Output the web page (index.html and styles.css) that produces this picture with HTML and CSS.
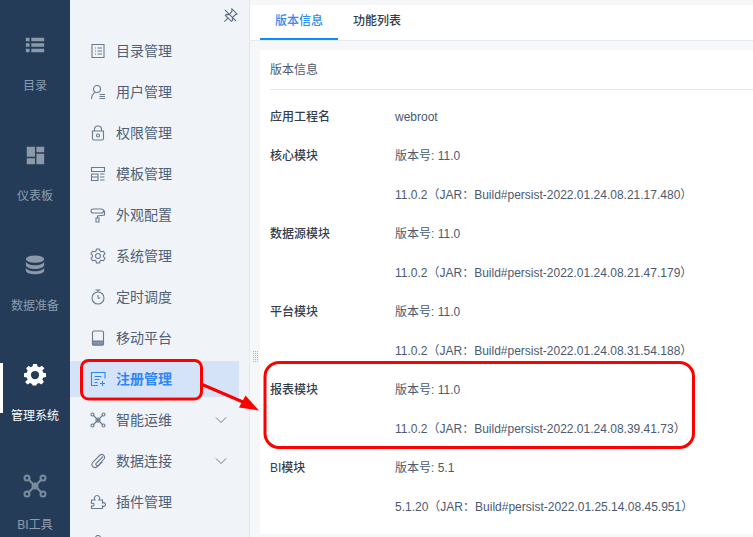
FILE: index.html
```html
<!DOCTYPE html>
<html lang="zh">
<head>
<meta charset="utf-8">
<title>版本信息</title>
<link rel="stylesheet" href="styles.css">
</head>
<body>
<div class="app">
  <aside class="rail">
    <div class="rail-item">
      <svg class="rail-icon" viewBox="0 0 24 24"><path class="fill" d="M2 4h4v4H2zM8 4h14v4H8zM2 10h4v4H2zM8 10h14v4H8zM2 16h4v4H2zM8 16h14v4H8z"/></svg>
      <span>目录</span>
    </div>
    <div class="rail-item">
      <svg class="rail-icon" viewBox="0 0 24 24"><path class="fill" d="M3 3h9v11H3zM13.500 3H22v6h-8.500zM13.500 10.500H22V22h-8.500zM3 15.500h9V22H3z"/></svg>
      <span>仪表板</span>
    </div>
    <div class="rail-item">
      <svg class="rail-icon" viewBox="0 0 24 24"><ellipse class="fill" cx="12" cy="5.500" rx="10" ry="4"/><path class="fill" d="M2 8.500c1 2.500 5 3.800 10 3.800s9-1.300 10-3.800v4c-1 2.500-5 3.800-10 3.800S3 15 2 12.500zM2 15c1 2.500 5 3.800 10 3.800S21 17.500 22 15v3.500c-1 2.500-5 3.500-10 3.500S3 21 2 18.500z"/></svg>
      <span>数据准备</span>
    </div>
    <div class="rail-item active">
      <svg class="rail-icon" viewBox="0 0 24 24"><path class="fill" d="M10 1h4l.6 3 2.300 1 2.600-1.700 2.800 2.800L20 8.700l1 2.300 3 .6v4l-3 .6-1 2.300 1.700 2.600-2.800 2.800-2.600-1.700-2.300 1-.6 1.800h-4l-.6-1.800-2.300-1-2.600 1.700-2.800-2.800L4 18.500l-1-2.300-3-.6v-4l3-.6 1-2.300-1.700-2.600 2.800-2.800L7.100 5l2.300-1z" transform="translate(0 -1.500)"/><circle cx="12" cy="12" r="4.500" fill="#243c58"/></svg>
      <span>管理系统</span>
    </div>
    <div class="rail-item">
      <svg class="rail-icon wide" viewBox="0 0 24 24"><path class="line" d="M5 5l14 14M19 5L5 19" /><circle class="line" cx="4" cy="4" r="2.500"/><circle class="line" cx="20" cy="4" r="2.500"/><circle class="line" cx="4" cy="20" r="2.500"/><circle class="line" cx="20" cy="20" r="2.500"/><circle class="line" cx="12" cy="12" r="2.500"/></svg>
      <span>BI工具</span>
    </div>
  </aside>

  <nav class="menu">
    <svg class="pin" viewBox="0 0 16 16"><path d="M9.500 1l5.500 5.500-2 .8-3 3 .2 2.700-1.200 1.200L2.500 8 3.700 6.800l2.700.2 3-3zM5 11l-3.500 3.500M2 2l12 12"/></svg>
    <a class="menu-item">
      <svg viewBox="0 0 16 16"><path d="M2 1.500h12v13H2zM5 5h1M7.500 5H12M5 8h1M7.500 8H12M5 11h1M7.500 11H12"/></svg>
      <span>目录管理</span>
    </a>
    <a class="menu-item">
      <svg viewBox="0 0 16 16"><circle cx="7" cy="5" r="3.500"/><path d="M1.500 15c0-3.500 1.500-5.500 3.500-6.500M9.500 10.500H15M9.500 12.500H15M9.500 14.500H15"/></svg>
      <span>用户管理</span>
    </a>
    <a class="menu-item">
      <svg viewBox="0 0 16 16"><path d="M4.500 6V4.500a3.500 3.500 0 0 1 7 0V6M2.500 6h11v7.500a1.500 1.500 0 0 1-1.500 1.500H4a1.500 1.500 0 0 1-1.500-1.500z"/><circle cx="8" cy="10.500" r="1.500"/></svg>
      <span>权限管理</span>
    </a>
    <a class="menu-item">
      <svg viewBox="0 0 16 16"><path d="M1.500 1.500h13v4h-13zM1.500 8h6.500v6.500H1.500zM10 8h4.500M10 11h4.500M10 14h4.500M1.500 11h6.500"/></svg>
      <span>模板管理</span>
    </a>
    <a class="menu-item">
      <svg viewBox="0 0 16 16"><path d="M3 2h8.500a1.500 1.500 0 0 1 0 4H3a1.500 1.500 0 0 1 0-4zM13 4h1.500v4L7.500 9v2M6 11h3v4H6z"/></svg>
      <span>外观配置</span>
    </a>
    <a class="menu-item">
      <svg viewBox="0 0 16 16"><path d="M6.500 1h3l.5 2 1.500.8 2-.6 1.500 2.600-1.500 1.400v1.600l1.500 1.400-1.500 2.600-2-.6-1.500.8-.5 2h-3l-.5-2-1.500-.8-2 .6L1 10.200l1.500-1.400V7.200L1 5.800l1.500-2.600 2 .6L6 3z" stroke-linejoin="round"/><circle cx="8" cy="8" r="2.500"/></svg>
      <span>系统管理</span>
    </a>
    <a class="menu-item">
      <svg viewBox="0 0 16 16"><circle cx="8" cy="9" r="6"/><path d="M5.500 1h5M8 1v2M8 6v3h2.500"/></svg>
      <span>定时调度</span>
    </a>
    <a class="menu-item">
      <svg viewBox="0 0 16 16"><rect x="2.500" y="1" width="11" height="14" rx="1.500"/><path class="solid" d="M2.500 11h11v3a1 1 0 0 1-1 1h-9a1 1 0 0 1-1-1z"/></svg>
      <span>移动平台</span>
    </a>
    <a class="menu-item active">
      <svg viewBox="0 0 16 16"><path d="M15 7.500V1.500H1.500v13H8M4.500 5.500h7M4.500 8.500h5M4.500 11.500h3M12.500 10v5M10 12.500h5"/></svg>
      <span>注册管理</span>
    </a>
    <a class="menu-item">
      <svg viewBox="0 0 16 16"><path d="M3 3l10 10M13 3L3 13"/><circle cx="2.500" cy="2.500" r="1.500"/><circle cx="13.500" cy="2.500" r="1.500"/><circle cx="2.500" cy="13.500" r="1.500"/><circle cx="13.500" cy="13.500" r="1.500"/><circle cx="8" cy="8" r="2"/></svg>
      <span>智能运维</span>
      <svg class="chev" viewBox="0 0 12 8"><path d="M1 1.500l5 5 5-5"/></svg>
    </a>
    <a class="menu-item">
      <svg viewBox="0 0 16 16"><path d="M13 3.500L6 10.500a1.500 1.500 0 0 0 2 2l6-6.500c2-2.500-1.500-6-4-4L3 9c-3 3.500 1 7.500 4.500 4.500l5-5"/></svg>
      <span>数据连接</span>
      <svg class="chev" viewBox="0 0 12 8"><path d="M1 1.500l5 5 5-5"/></svg>
    </a>
    <a class="menu-item">
      <svg viewBox="0 0 16 16"><path d="M1.500 6h3.500c-1.500-2 0-4.500 2-4.500S10.500 4 9 6h3.500v3c2-1 3 .5 3 1.500s-1 2.500-3 1.500v2.500h-11v-2.500c2 .5 2.500-.5 2.500-1.500S3.500 9 1.500 9.500z"/></svg>
      <span>插件管理</span>
    </a>
    <a class="menu-item">
      <svg viewBox="0 0 16 16"><circle cx="8" cy="3" r="2.500"/></svg>
    </a>
  </nav>

  <main class="main">
    <div class="tabs">
      <div class="tab active">版本信息</div>
      <div class="tab">功能列表</div>
    </div>
    <section class="card">
      <h2 class="card-title">版本信息</h2>
      <div class="rows">
        <div class="row"><b>应用工程名</b><span>webroot</span></div>
        <div class="row"><b>核心模块</b><span>版本号: 11.0</span></div>
        <div class="row"><b></b><span>11.0.2（JAR：Build#persist-2022.01.24.08.21.17.480）</span></div>
        <div class="row"><b>数据源模块</b><span>版本号: 11.0</span></div>
        <div class="row"><b></b><span>11.0.2（JAR：Build#persist-2022.01.24.08.21.47.179）</span></div>
        <div class="row"><b>平台模块</b><span>版本号: 11.0</span></div>
        <div class="row"><b></b><span>11.0.2（JAR：Build#persist-2022.01.24.08.31.54.188）</span></div>
        <div class="row"><b>报表模块</b><span>版本号: 11.0</span></div>
        <div class="row"><b></b><span>11.0.2（JAR：Build#persist-2022.01.24.08.39.41.73）</span></div>
        <div class="row"><b>BI模块</b><span>版本号: 5.1</span></div>
        <div class="row"><b></b><span>5.1.20（JAR：Build#persist-2022.01.25.14.08.45.951）</span></div>
      </div>
    </section>
  </main>

  <svg class="grip" viewBox="0 0 5 11"><path d="M.5 0v11M2.500 0v11M4.500 0v11"/></svg>

  <svg class="marks" viewBox="0 0 753 537">
    <rect x="81.500" y="360.500" width="120" height="38.500" rx="7"/>
    <rect x="265" y="362.500" width="428.500" height="85" rx="14"/>
    <path d="M201 384l42 18"/>
    <path class="head" d="M259 410.500l-20-3 6.500-12z"/>
  </svg>
</div>
</body>
</html>
```
FILE: styles.css
```css
* { box-sizing: border-box; }
html, body { margin: 0; height: 100%; }
body {
  overflow: hidden;
  font-family: "Liberation Sans", "Noto Sans CJK SC", sans-serif;
  font-size: 12px;
}
.app {
  position: relative;
  display: flex;
  width: 753px;
  height: 537px;
  overflow: hidden;
}

/* icon rail */
.rail {
  flex: 0 0 70px;
  display: flex;
  flex-direction: column;
  padding-top: 10px;
  background: #243c58;
  color: #8c9cae;
}
.rail-item {
  position: relative;
  flex: 0 0 110px;
  display: flex;
  flex-direction: column;
  align-items: center;
  padding-top: 24px;
  gap: 19px;
  line-height: 16px;
}
.rail-icon { width: 22px; height: 22px; margin-bottom: 3px; }
.rail-icon.wide { width: 24px; height: 24px; margin-bottom: 0; }
.rail-icon .fill { fill: #8c99a9; }
.rail-icon .line { fill: none; stroke: #7b8b9e; stroke-width: 2; }
.rail-item.active { color: #fff; }
.rail-item.active .fill { fill: #fff; }
.rail-item.active::before {
  content: "";
  position: absolute;
  left: 0;
  top: 23px;
  width: 3px;
  height: 50px;
  background: #fff;
}

/* menu */
.menu {
  position: relative;
  flex: 0 0 180px;
  display: flex;
  flex-direction: column;
  gap: 5px;
  padding: 33px 10px 0 0;
  background: #f0f4f9;
  border-right: 1px solid #e3e7ed;
  overflow: hidden;
}
.pin {
  position: absolute;
  top: 8px;
  right: 11px;
  width: 15px;
  height: 15px;
  fill: none;
  stroke: #5f6f85;
  stroke-width: 1.2;
}
.menu-item {
  flex: 0 0 36px;
  display: flex;
  align-items: center;
  padding-left: 20px;
  font-size: 14px;
  color: #4f5f75;
}
.menu-item span { margin-bottom: 2px; }
.menu-item > svg:first-child {
  flex: 0 0 16px;
  height: 16px;
  margin-right: 10px;
  fill: none;
  stroke: #6a7a8f;
  stroke-width: 1.1;
}
.menu-item .solid { fill: #8794a6; }
.menu-item .chev {
  width: 12px;
  height: 8px;
  margin-left: auto;
  margin-right: 12px;
  fill: none;
  stroke: #6b7a8d;
  stroke-width: 1;
}
.menu-item.active {
  background: #d5e3f8;
  color: #2f86f5;
  font-weight: 700;
}
.menu-item.active > svg:first-child { stroke: #2f86f5; }

/* main panel */
.main {
  flex: 1;
  display: flex;
  flex-direction: column;
  min-width: 0;
  padding-top: 5px;
  background: #f5f7f9;
}
.tabs {
  flex: 0 0 36px;
  display: flex;
  padding-left: 10px;
  background: #fff;
  border-bottom: 1px solid #e6e9ee;
}
.tab {
  height: 35px;
  padding: 0 15px;
  line-height: 32px;
  font-weight: 500;
  color: #333d4b;
}
.tab.active {
  color: #2f8cf5;
  border-bottom: 2px solid #0d8cfa;
}
.card {
  margin: 9px 0 3px 10px;
  flex: 1;
  padding: 0 0 0 10px;
  background: #fff;
}
.card-title {
  margin: 0;
  height: 40px;
  line-height: 41px;
  font-size: 12px;
  font-weight: 400;
  color: #4f5a69;
  border-bottom: 1px solid #e8eaed;
}
.rows { padding-top: 8px; }
.row {
  display: grid;
  grid-template-columns: 125px 1fr;
  height: 39px;
  line-height: 39px;
  color: #4a5a70;
}
.row b { font-weight: 500; color: #333d4b; }

/* overlays */
.grip {
  position: absolute;
  left: 253px;
  top: 351px;
  width: 5px;
  height: 11px;
  fill: none;
  stroke: #aab3bf;
  stroke-width: 1;
  stroke-dasharray: 1 1;
}
.marks {
  position: absolute;
  inset: 0;
  width: 753px;
  height: 537px;
  fill: none;
  stroke: #f00;
  stroke-width: 3;
  pointer-events: none;
}
.marks .head { fill: #f00; stroke: none; }
```
